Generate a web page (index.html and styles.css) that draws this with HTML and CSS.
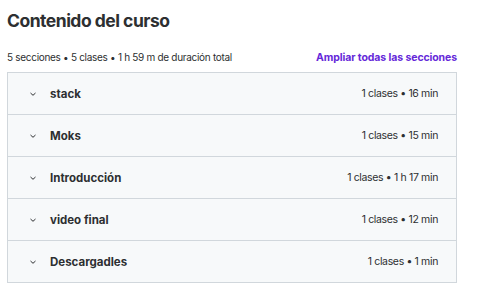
FILE: index.html
```html
<!DOCTYPE html>
<html lang="es">
<head>
<meta charset="utf-8">
<link rel="stylesheet" href="styles.css">
</head>
<body>
<section class="curriculum">
  <h2 class="title">Contenido del curso</h2>
  <div class="meta-row">
    <span class="meta">5 secciones • 5 clases • 1 h 59 m de duración total</span>
    <button class="expand">Ampliar todas las secciones</button>
  </div>
  <div class="sections">
    <div class="section">
      <svg class="chev" viewBox="0 0 10 10"><path d="M2.5 4 L5 6.3 L7.5 4" fill="none" stroke="#2d2f31" stroke-width="1"/></svg>
      <span class="name">stack</span>
      <span class="info">1 clases • 16 min</span>
    </div>
    <div class="section">
      <svg class="chev" viewBox="0 0 10 10"><path d="M2.5 4 L5 6.3 L7.5 4" fill="none" stroke="#2d2f31" stroke-width="1"/></svg>
      <span class="name">Moks</span>
      <span class="info">1 clases • 15 min</span>
    </div>
    <div class="section">
      <svg class="chev" viewBox="0 0 10 10"><path d="M2.5 4 L5 6.3 L7.5 4" fill="none" stroke="#2d2f31" stroke-width="1"/></svg>
      <span class="name">Introducción</span>
      <span class="info">1 clases • 1 h 17 min</span>
    </div>
    <div class="section">
      <svg class="chev" viewBox="0 0 10 10"><path d="M2.5 4 L5 6.3 L7.5 4" fill="none" stroke="#2d2f31" stroke-width="1"/></svg>
      <span class="name">video final</span>
      <span class="info">1 clases • 12 min</span>
    </div>
    <div class="section">
      <svg class="chev" viewBox="0 0 10 10"><path d="M2.5 4 L5 6.3 L7.5 4" fill="none" stroke="#2d2f31" stroke-width="1"/></svg>
      <span class="name">Descargadles</span>
      <span class="info">1 clases • 1 min</span>
    </div>
  </div>
</section>
</body>
</html>
```
FILE: styles.css
```css
* { box-sizing: border-box; }
html, body { margin: 0; padding: 0; background: #fff; }
body {
  font-family: Inter, "Liberation Sans", Arial, sans-serif;
  color: #2d2f31;
}
.curriculum {
  width: 450px;
  margin-left: 7px;
  padding-top: 9px;
}
.title {
  margin: 0;
  font-size: 17.5px;
  font-weight: 700;
  line-height: 24px;
  letter-spacing: -0.5px;
}
.meta-row {
  display: flex;
  justify-content: space-between;
  align-items: center;
  margin-top: 14px;
  height: 20px;
}
.meta {
  font-size: 10px;
  letter-spacing: -0.3px;
}
.expand {
  border: 0;
  background: none;
  padding: 0;
  font-family: inherit;
  font-size: 10.5px;
  font-weight: 700;
  color: #6528d9;
  letter-spacing: -0.1px;
}
.sections {
  margin-top: 5px;
  border: 1px solid #d1d7dc;
  background: #f7f9fa;
}
.section {
  display: flex;
  align-items: center;
  height: 42px;
  padding: 0 18px 0 20px;
  border-bottom: 1px solid #d1d7dc;
}
.section:last-child { border-bottom: 0; height: 41px; }
.chev {
  width: 10px;
  height: 10px;
  flex: none;
}
.name {
  margin-left: 12px;
  font-size: 11.5px;
  font-weight: 700;
  flex: 1;
}
.info {
  font-size: 10.5px;
  letter-spacing: -0.35px;
}
```
